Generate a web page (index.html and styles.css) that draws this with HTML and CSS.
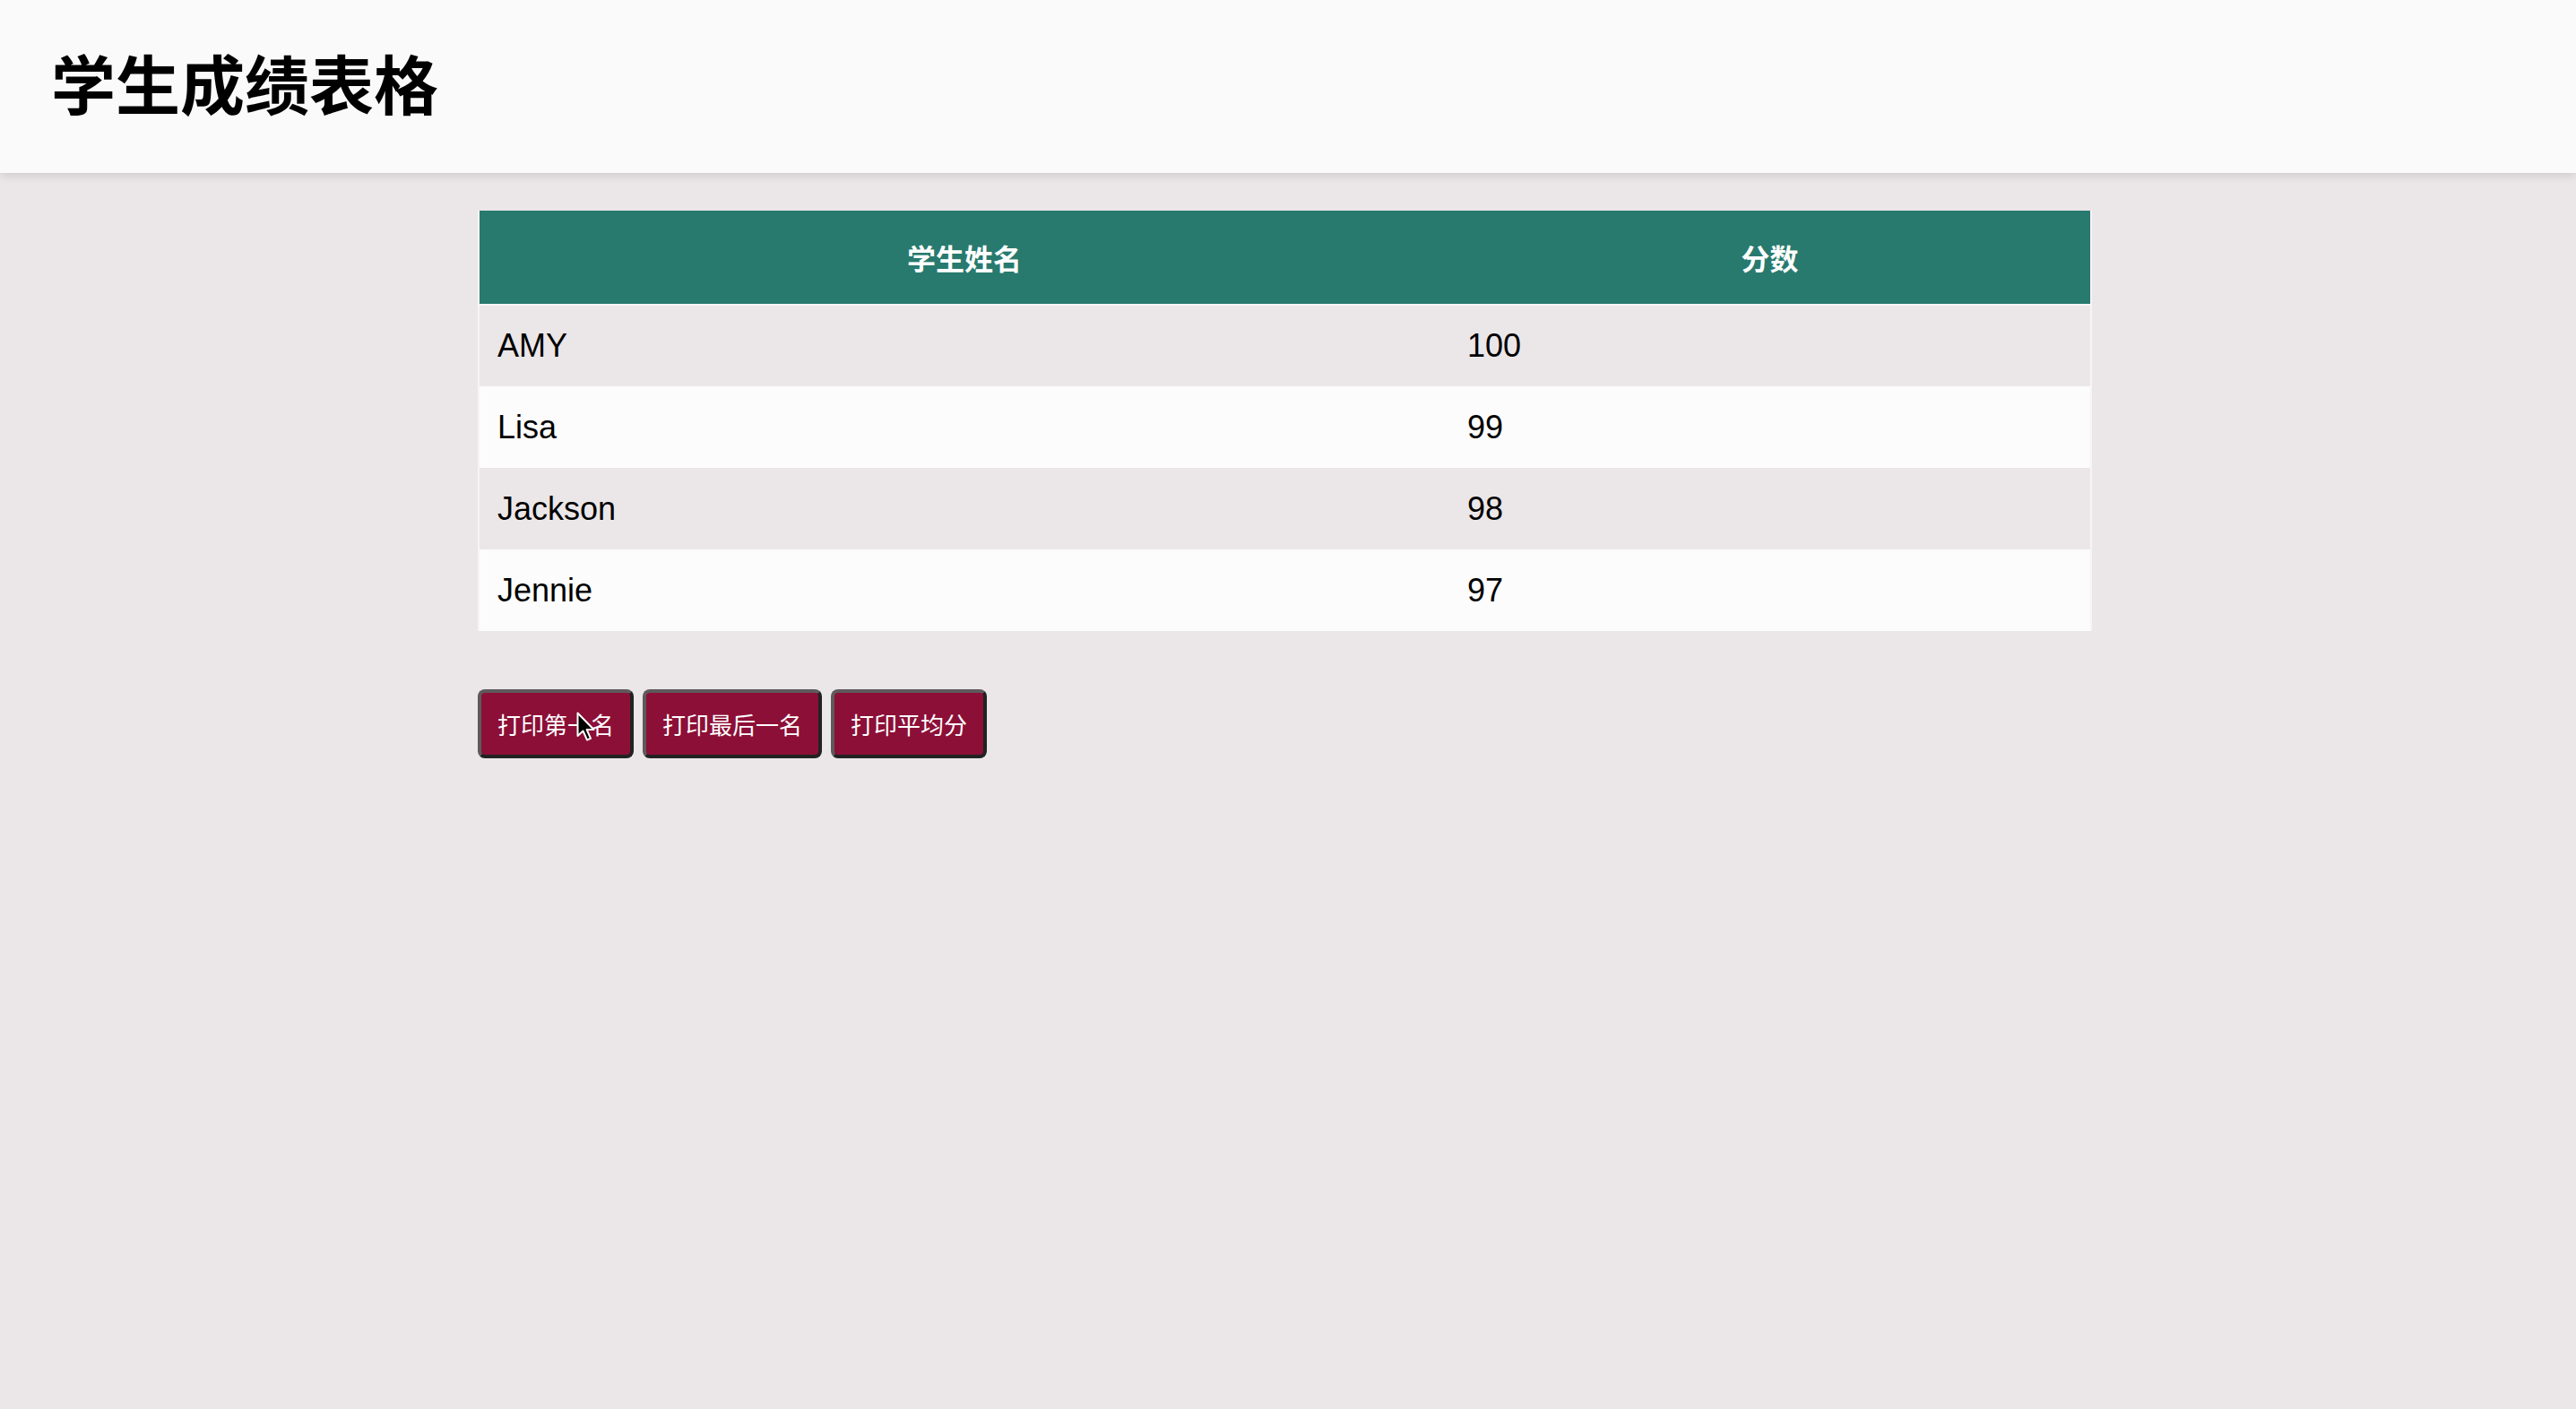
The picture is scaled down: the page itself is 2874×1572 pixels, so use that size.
FILE: index.html
```html
<html>
	<head>
		<meta charset="utf-8" />
		<title>学生成绩表格</title>
		<link rel="stylesheet" href="styles.css">
	</head>
	<body>
		<div class="header">
			<h1 class="title">学生成绩表格</h1>
		</div>

		<div class="main">
			<table class="score-table">
				<thead>
					<tr>
						<th class="col-name">学生姓名</th>
						<th>分数</th>
					</tr>
				</thead>
				<tbody>
					<tr><td>AMY</td><td>100</td></tr>
					<tr><td>Lisa</td><td>99</td></tr>
					<tr><td>Jackson</td><td>98</td></tr>
					<tr><td>Jennie</td><td>97</td></tr>
				</tbody>
			</table>

			<div class="actions">
				<button class="btn">打印第一名</button>
				<button class="btn">打印最后一名</button>
				<button class="btn">打印平均分</button>
				<!-- 鼠标指针 -->
				<svg class="cursor" width="22" height="34" viewBox="0 0 22 34">
					<path d="M1.5 1.5 L1.5 27 L7.5 21.5 L12 31.5 L16 29.8 L11.6 20 L19.5 20 Z" fill="#000" stroke="#fff" stroke-width="2" stroke-linejoin="round"/>
				</svg>
			</div>
		</div>
	</body>
</html>
```

FILE: styles.css
```css
/**
* 整体背景，灰粉色
*/
body{
	margin: 0;
	background: #ebe6e8;
	font-family: "Liberation Sans", "Noto Sans CJK SC", sans-serif;
	color: #000;
}
.header{
	height: 193px;
	background: #fafafa;
	box-shadow: 0 3px 10px rgba(0,0,0,0.12);
	display: flex;
	align-items: center;
	padding: 0 57px;
	box-sizing: border-box;
}
.title{
	margin: 0;
	font-size: 72px;
	font-weight: bold;
	line-height: 1;
}
.main{
	width: 1801px;
	margin: 42px 0 0 calc(50% - 904px);
}
/**
* 表格，表头绿色，奇偶行背景不一样
*/
.score-table{
	width: 100%;
	border-collapse: collapse;
	border-left: 2px solid #f6f4f5;
	border-right: 2px solid #f6f4f5;
}
.score-table th{
	height: 105px;
	padding: 0 20px;
	background: #287a6e;
	color: #fff;
	font-size: 32px;
	font-weight: bold;
	text-align: center;
	border-bottom: 2px solid #f7f5f6;
}
.score-table .col-name{
	width: 60.2%;
}
.score-table td{
	height: 91px;
	padding: 0 20px;
	font-size: 36px;
	text-align: left;
}
.score-table tbody tr:nth-child(odd){
	background: #ebe6e8;
}
.score-table tbody tr:nth-child(even){
	background: #fcfcfc;
}
/**
* 按钮
*/
.actions{
	margin-top: 65px;
	display: flex;
	gap: 10px;
	position: relative;
}
.btn{
	height: 77px;
	padding: 0 18px;
	background: #8c0f37;
	color: #fff;
	font-family: "Liberation Sans", "Noto Sans CJK SC", sans-serif;
	font-size: 26px;
	border: 4px solid;
	border-color: #5e5a5c #222 #222 #5e5a5c;
	border-radius: 8px;
}
.cursor{
	position: absolute;
	left: 110px;
	top: 25px;
}
```
